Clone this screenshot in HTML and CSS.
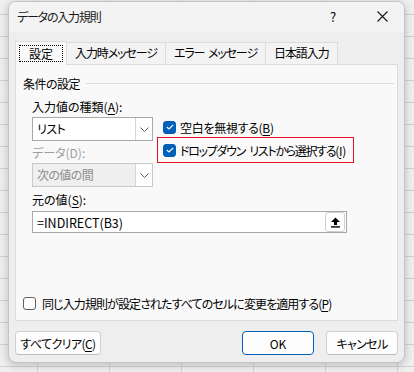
FILE: index.html
```html
<!DOCTYPE html>
<html>
<head>
    <title>データの入力規則</title>
    <link rel="stylesheet" href="styles.css">
</head>
<body>

<div class="dialog">
    <div class="titlebar">
        <span class="title">データの入力規則</span>
        <span class="help">?</span>
        <span class="close">
            <svg width="11" height="11" viewBox="0 0 11 11"><path d="M0.5 0.5 L10.5 10.5 M10.5 0.5 L0.5 10.5" stroke="#1a1a1a" stroke-width="1.1" fill="none"/></svg>
        </span>
    </div>

    <div class="tabs">
        <div class="tab active"><span class="focus">設定</span></div>
        <div class="tab">入力時メッセージ</div>
        <div class="tab">エラー メッセージ</div>
        <div class="tab">日本語入力</div>
    </div>

    <div class="panel">
        <div class="group-title"><span>条件の設定</span></div>

        <div class="fields">
            <div class="criteria">
                <div class="col-left">
                    <div class="label">入力値の種類(<u>A</u>):</div>
                    <div class="select">
                        <span class="value">リスト</span>
                        <span class="drop"><svg width="9" height="5" viewBox="0 0 9 5"><polyline points="0.5,0.5 4.5,4.5 8.5,0.5" stroke="#606060" fill="none"/></svg></span>
                    </div>
                    <div class="label disabled">データ(D):</div>
                    <div class="select disabled">
                        <span class="value">次の値の間</span>
                        <span class="drop"><svg width="9" height="5" viewBox="0 0 9 5"><polyline points="0.5,0.5 4.5,4.5 8.5,0.5" stroke="#606060" fill="none"/></svg></span>
                    </div>
                </div>
                <div class="col-right">
                    <div class="check">
                        <span class="box checked"><svg width="8" height="6" viewBox="0 0 8 6"><polyline points="0.8,3 3,5 7.2,0.8" stroke="#fff" stroke-width="1.2" fill="none"/></svg></span>
                        <span>空白を無視する(<u>B</u>)</span>
                    </div>
                    <div class="check highlight">
                        <span class="box checked"><svg width="8" height="6" viewBox="0 0 8 6"><polyline points="0.8,3 3,5 7.2,0.8" stroke="#fff" stroke-width="1.2" fill="none"/></svg></span>
                        <span>ドロップダウン リストから選択する(<u>I</u>)</span>
                    </div>
                </div>
            </div>

            <div class="label source-label">元の値(<u>S</u>):</div>
            <div class="source">
                <span class="value">=INDIRECT(B3)</span>
                <span class="pick">
                    <svg width="11" height="11" viewBox="0 0 11 11"><polygon points="5.5,0.5 10,5 7,5 7,8 4,8 4,5 1,5" fill="#000"/><rect x="1" y="9.2" width="9" height="1.4" fill="#000"/></svg>
                </span>
            </div>
        </div>

        <div class="check apply">
            <span class="box"></span>
            <span>同じ入力規則が設定されたすべてのセルに変更を適用する(<u>P</u>)</span>
        </div>
    </div>

    <div class="footer">
        <button class="btn wide">すべてクリア(<u>C</u>)</button>
        <span class="spacer"></span>
        <button class="btn ok">OK</button>
        <button class="btn">キャンセル</button>
    </div>
</div>

</body>
</html>
```

FILE: styles.css
```css
body {
    margin: 0;
    height: 372px;
    overflow: hidden;
    font-family: "Noto Sans CJK JP", "Noto Sans", sans-serif;
    font-feature-settings: "palt";
    font-size: 12px;
    color: #000;
    background-color: #efefef;
    background-image:
        linear-gradient(to right, #d2d2d2 1px, transparent 1px),
        linear-gradient(to bottom, #d2d2d2 1px, transparent 1px);
    background-size: 72px 22px;
    background-position: 37px 14px;
}

u {
    text-decoration-thickness: 1px;
    text-underline-offset: 2px;
}

/* dialog window */
.dialog {
    margin: 1px 0 0 8px;
    width: 395px;
    height: 360px;
    border: 1px solid #c4c4c4;
    border-radius: 8px;
    background: #eeeeee;
    box-shadow: 0 2px 8px rgba(0, 0, 0, 0.22);
    display: flex;
    flex-direction: column;
    overflow: hidden;
}

.titlebar {
    height: 30px;
    padding-bottom: 1px;
    box-sizing: border-box;
    background: #f3f3f3;
    display: flex;
    align-items: center;
}

.title {
    margin-left: 8px;
    flex: 1;
    color: #1a1a1a;
    letter-spacing: -1.2px;
}

.help {
    width: 16px;
    text-align: center;
    font-size: 13px;
    margin-right: 36px;
}

.close {
    display: flex;
    margin-right: 16px;
}

/* tab strip */
.tabs {
    display: flex;
    align-items: flex-end;
    padding: 8px 0 0 6px;
    height: 24px;
}

.tab {
    height: 21px;
    padding: 0 8px;
    line-height: 20px;
    background: #f3f3f3;
    border: 1px solid #dcdcdc;
    border-bottom: none;
    margin-left: -1px;
    white-space: nowrap;
    letter-spacing: -1.1px;
    word-spacing: 2px;
}

.tab.active {
    height: 24px;
    width: 52px;
    padding: 0;
    margin-left: 0;
    margin-bottom: -1px;
    background: #f9f9f9;
    position: relative;
    z-index: 1;
    display: flex;
    justify-content: center;
    padding-top: 3px;
    box-sizing: border-box;
    letter-spacing: 0;
}

.focus {
    width: 44px;
    height: 17px;
    line-height: 16px;
    text-align: center;
    border: 1px dotted #000;
    box-sizing: border-box;
}

/* settings panel */
.panel {
    margin: 0 6px;
    height: 257px;
    box-sizing: border-box;
    background: #f9f9f9;
    border: 1px solid #dcdcdc;
    padding: 10px 7px 9px;
    display: flex;
    flex-direction: column;
}

.group-title {
    display: flex;
    align-items: center;
    height: 16px;
    letter-spacing: -0.5px;
}

.group-title::after {
    content: "";
    flex: 1;
    height: 1px;
    background: #dcdcdc;
    margin-left: 6px;
    margin-right: -4px;
}

.fields {
    padding-left: 9px;
    margin-top: 8px;
}

.criteria {
    display: flex;
    gap: 4px;
}

.col-left {
    width: 121px;
}

.label {
    height: 16px;
    line-height: 16px;
}

.label.disabled {
    color: #9d9d9d;
    margin-top: 4px;
}

.select {
    margin-top: 2px;
    height: 24px;
    box-sizing: border-box;
    border: 1px solid #a9a9a9;
    background: #fff;
    display: flex;
    align-items: stretch;
}

.select .value {
    flex: 1;
    padding-left: 4px;
    line-height: 22px;
    letter-spacing: -0.6px;
}

.select .drop {
    width: 16px;
    border-left: 1px solid #d6d6d6;
    display: flex;
    align-items: center;
    justify-content: center;
    background: #fff;
}

.select.disabled {
    background: #efefef;
    border-color: #c8c8c8;
    color: #8d8d8d;
}

.col-right {
    padding-top: 18px;
}

.check {
    display: flex;
    align-items: center;
    gap: 4px;
    height: 20px;
    white-space: nowrap;
    letter-spacing: -0.3px;
}

.check.highlight {
    height: 26px;
    width: 197px;
    box-sizing: border-box;
    border: 1px solid #e81123;
    padding-left: 5px;
    letter-spacing: -1.3px;
    word-spacing: 3px;
}

.check.highlight u {
    margin: 0 1px;
}

.col-right .check:first-child {
    padding-left: 6px;
}

.box {
    width: 13px;
    height: 13px;
    box-sizing: border-box;
    border: 1px solid #5f5f5f;
    border-radius: 3px;
    background: #fff;
    display: flex;
    align-items: center;
    justify-content: center;
    flex: none;
}

.box.checked {
    border-color: #005fb8;
    background: #005fb8;
}

.source-label {
    margin-top: 5px;
}

.source {
    margin-top: 3px;
    width: 315px;
    height: 22px;
    box-sizing: border-box;
    border: 1px solid #a9a9a9;
    background: #fff;
    display: flex;
    align-items: center;
}

.source .value {
    flex: 1;
    padding-left: 4px;
    font-size: 12.5px;
}

.pick {
    width: 20px;
    height: 20px;
    box-sizing: border-box;
    border: 1px solid #cfcfcf;
    border-radius: 3px;
    margin-right: 1px;
    display: flex;
    align-items: center;
    justify-content: center;
}

.apply {
    margin-top: auto;
    height: 16px;
    gap: 6px;
    letter-spacing: -0.9px;
}

/* bottom buttons */
.footer {
    display: flex;
    padding: 10px 6px 0;
    gap: 12px;
}

.spacer {
    flex: 1;
}

.btn {
    height: 24px;
    width: 72px;
    font: inherit;
    font-feature-settings: "palt";
    color: #000;
    background: #fdfdfd;
    border: 1px solid #d0d0d0;
    border-bottom-color: #bdbdbd;
    border-radius: 4px;
    padding: 0;
    letter-spacing: -0.6px;
}

.btn.wide {
    width: 86px;
}

.btn.ok {
    border: 1px solid #005fb8;
    letter-spacing: 0;
}
```
